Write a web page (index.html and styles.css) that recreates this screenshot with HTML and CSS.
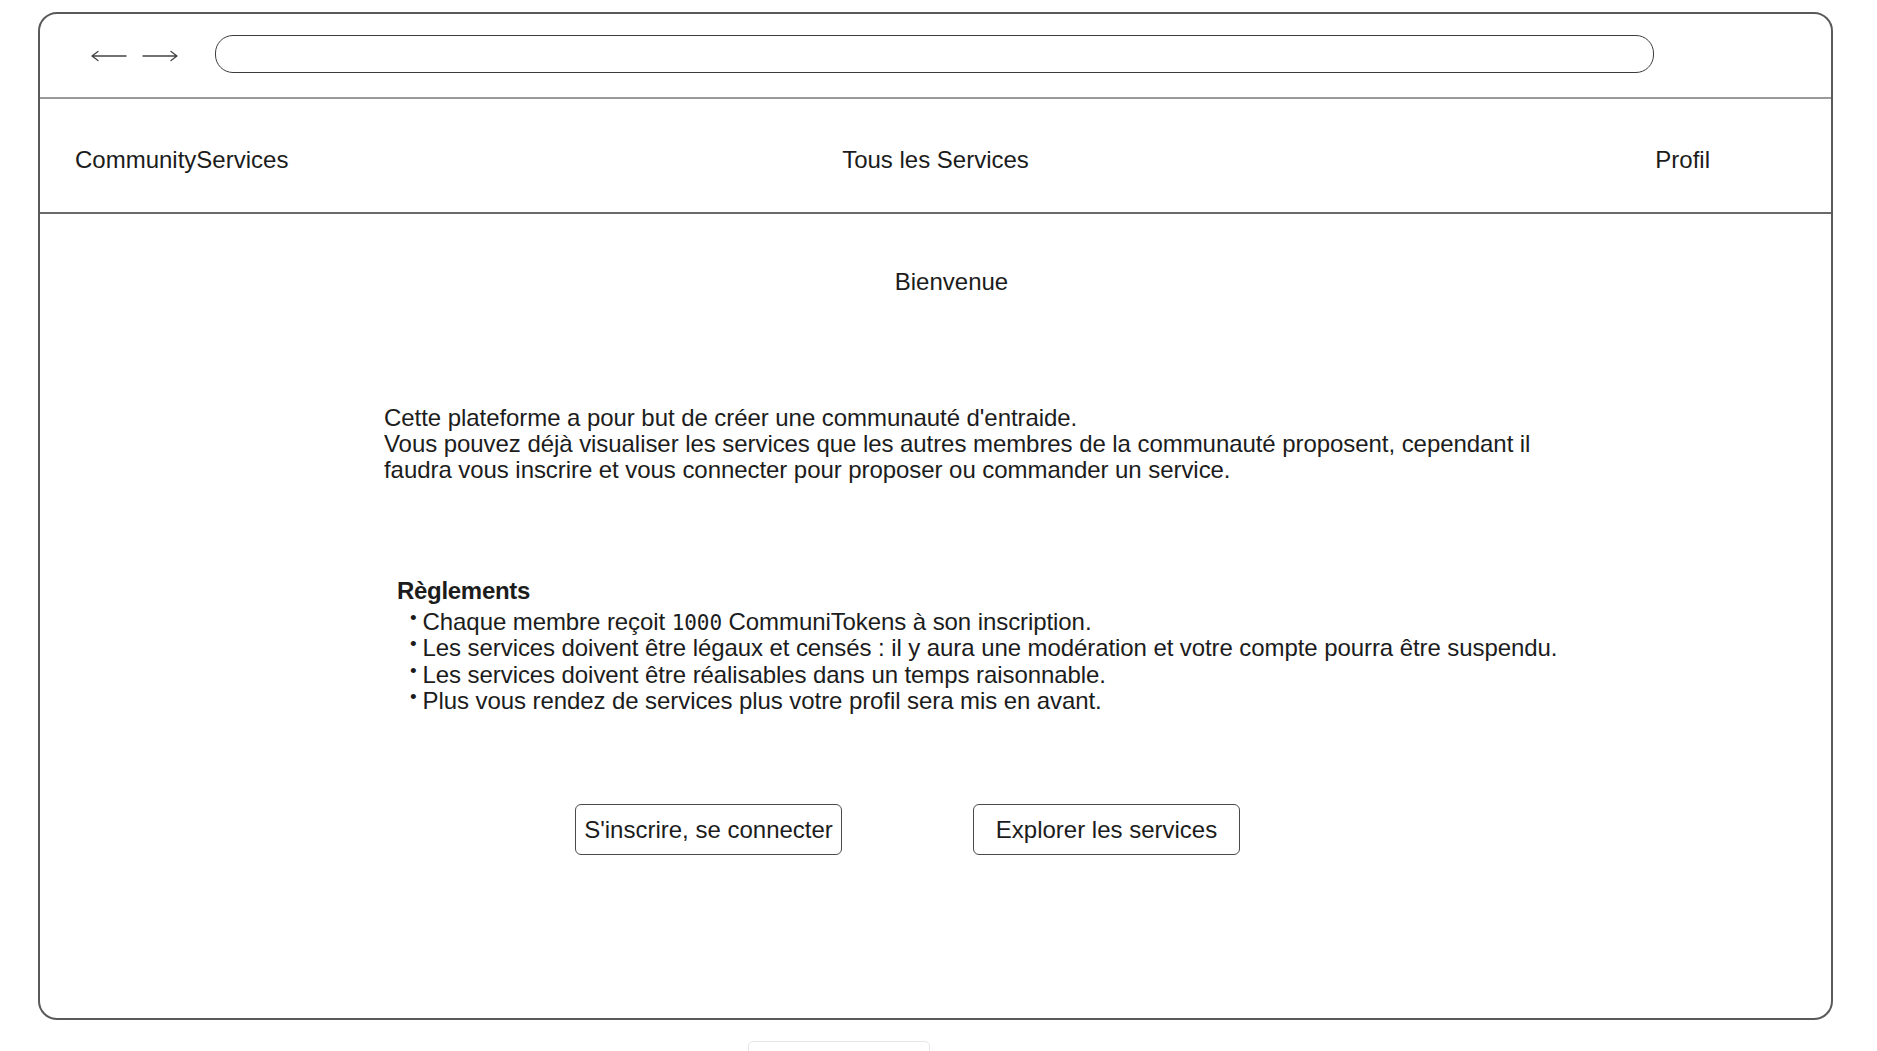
FILE: index.html
```html
<!DOCTYPE html>
<html lang="fr">
<head>
<meta charset="utf-8">
<title>CommunityServices</title>
<link rel="stylesheet" href="styles.css">
</head>
<body>
<div class="window">
  <div class="toolbar">
    <div class="arrows">
      <svg class="arrow" width="36" height="12" viewBox="0 0 36 12"><path d="M35 6H1M7 1.5L1 6l6 4.5" fill="none" stroke="#444" stroke-width="1.3" stroke-linecap="round" stroke-linejoin="round"/></svg>
      <svg class="arrow" width="36" height="12" viewBox="0 0 36 12"><path d="M1 6h34M29 1.5L35 6l-6 4.5" fill="none" stroke="#444" stroke-width="1.3" stroke-linecap="round" stroke-linejoin="round"/></svg>
    </div>
    <div class="address"></div>
  </div>
  <nav class="nav">
    <div class="nav-brand">CommunityServices</div>
    <div class="nav-center">Tous les Services</div>
    <div class="nav-right">Profil</div>
  </nav>
  <main class="main">
    <h1 class="title">Bienvenue</h1>
    <p class="intro">Cette plateforme a pour but de créer une communauté d'entraide.<br>Vous pouvez déjà visualiser les services que les autres membres de la communauté proposent, cependant il faudra vous inscrire et vous connecter pour proposer ou commander un service.</p>
    <section class="rules">
      <h2 class="rules-title">Règlements</h2>
      <ul class="rules-list">
        <li><span class="dot">•</span>Chaque membre reçoit <span class="mono">1000</span> CommuniTokens à son inscription.</li>
        <li><span class="dot">•</span>Les services doivent être légaux et censés : il y aura une modération et votre compte pourra être suspendu.</li>
        <li><span class="dot">•</span>Les services doivent être réalisables dans un temps raisonnable.</li>
        <li><span class="dot">•</span>Plus vous rendez de services plus votre profil sera mis en avant.</li>
      </ul>
    </section>
    <div class="actions">
      <button class="btn">S'inscrire, se connecter</button>
      <button class="btn">Explorer les services</button>
    </div>
  </main>
</div>
<div class="footer-hint"></div>
</body>
</html>
```

FILE: styles.css
```css
html, body {
  margin: 0;
  padding: 0;
  background: #ffffff;
}
body {
  font-family: "Liberation Sans", Arial, Helvetica, sans-serif;
  color: #1c1c1c;
  padding-top: 12px;
  overflow: hidden;
}
.window {
  margin-left: 38px;
  width: 1795px;
  height: 1008px;
  border: 2px solid #5a5a5a;
  border-radius: 19px;
  display: flex;
  flex-direction: column;
  box-sizing: border-box;
}
.toolbar {
  height: 85px;
  box-sizing: border-box;
  border-bottom: 2px solid #9a9a9a;
  display: flex;
  align-items: flex-start;
  padding-top: 21px;
  padding-left: 51px;
  padding-right: 177px;
}
.arrows {
  display: flex;
  gap: 15px;
  margin-top: 15px;
}
.arrow {
  display: block;
}
.address {
  flex: 1;
  height: 38px;
  box-sizing: border-box;
  margin-left: 37px;
  border: 1.5px solid #3c3c3c;
  border-radius: 18px;
}
.nav {
  height: 115px;
  box-sizing: border-box;
  border-bottom: 2px solid #6a6a6a;
  display: grid;
  grid-template-columns: 1fr auto 1fr;
  align-items: center;
  padding: 8px 121px 0 35px;
  font-size: 24px;
  line-height: 28px;
}
.nav-center {
  justify-self: center;
  padding-left: 86px;
}
.nav-right {
  justify-self: end;
}
.main {
  flex: 1;
  display: flex;
  flex-direction: column;
}
.title {
  margin: 54px 0 0 0;
  font-size: 24px;
  font-weight: normal;
  line-height: 28px;
  text-align: center;
  padding-left: 32px;
}
.intro {
  margin: 109px 0 0 344px;
  width: 1180px;
  font-size: 24px;
  line-height: 26px;
  letter-spacing: -0.06px;
}
.rules {
  margin: 95px 0 0 357px;
}
.rules-title {
  margin: 0;
  font-size: 24px;
  font-weight: bold;
  line-height: 26px;
  letter-spacing: -0.3px;
}
.rules-list {
  list-style: none;
  margin: 5px 0 0 0;
  padding: 0 0 0 13px;
  font-size: 24px;
  line-height: 26.3px;
  letter-spacing: -0.08px;
}
.rules-list li {
  height: 26.3px;
}
.dot {
  font-size: 19px;
  line-height: 0;
  vertical-align: 6px;
  margin-right: 6px;
}
.mono {
  font-family: "DejaVu Sans Mono", "Liberation Mono", monospace;
  font-size: 21px;
  line-height: 0;
}
.actions {
  display: flex;
  gap: 131px;
  margin: 90px 0 0 535px;
}
.btn {
  width: 267px;
  height: 51px;
  box-sizing: border-box;
  background: #ffffff;
  border: 1.5px solid #4a4a4a;
  border-radius: 6px;
  font-family: "Liberation Sans", Arial, Helvetica, sans-serif;
  font-size: 24px;
  color: #1c1c1c;
  padding: 0;
}
.footer-hint {
  margin: 21px 0 0 748px;
  width: 180px;
  height: 40px;
  border: 1px solid #e6e6e6;
  border-radius: 5px;
}
```
